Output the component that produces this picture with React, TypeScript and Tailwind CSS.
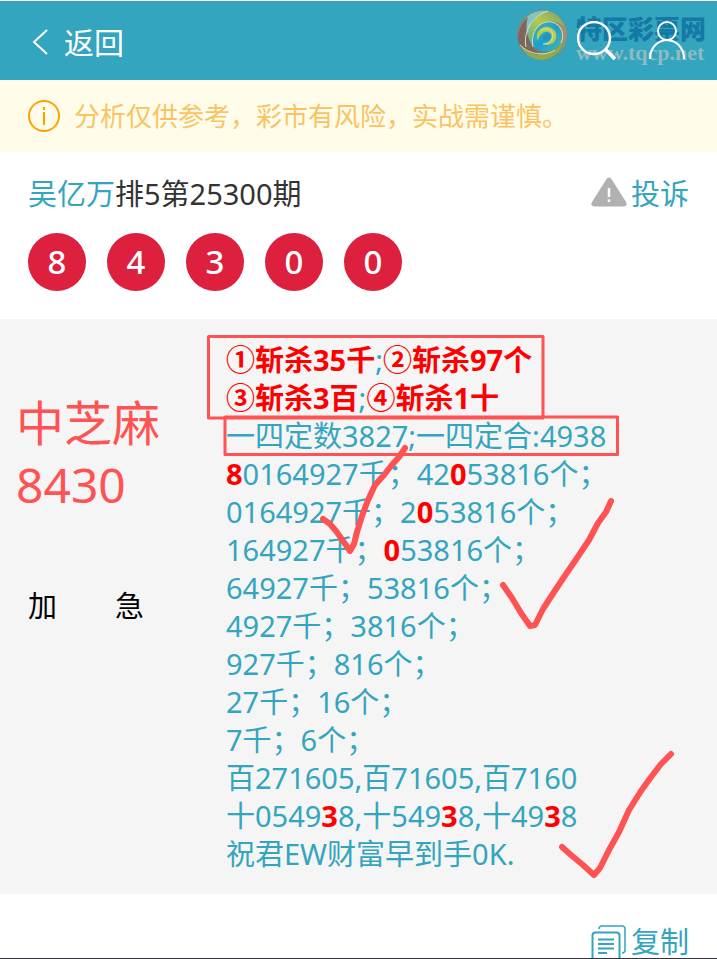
import type { ReactNode } from 'react';

const balls = [8, 4, 3, 0, 0];

function Hit({ children }: { children: ReactNode }) {
  return <b className="font-bold text-[#ff0000]">{children}</b>;
}

function SiteMark() {
  return (
    <div className="pointer-events-none absolute right-[11px] top-2 flex items-center gap-2">
      <svg className="h-[52px] w-[52px]" viewBox="0 0 52 52" fill="none">
        <defs>
          <linearGradient id="rim" x1="0" y1="0" x2="1" y2="1">
            <stop offset="0" stopColor="#7f9a86" />
            <stop offset="0.4" stopColor="#8a6f68" />
            <stop offset="1" stopColor="#4f8f7c" />
          </linearGradient>
          <linearGradient id="leaf" x1="0" y1="1" x2="1" y2="0">
            <stop offset="0" stopColor="#4fae9a" />
            <stop offset="0.5" stopColor="#b7c94e" />
            <stop offset="1" stopColor="#7c9f70" />
          </linearGradient>
          <linearGradient id="east" x1="0" y1="0" x2="0" y2="1">
            <stop offset="0" stopColor="#6fa06f" />
            <stop offset="0.5" stopColor="#b08a6c" />
            <stop offset="1" stopColor="#6f9a80" />
          </linearGradient>
          <linearGradient id="pool" x1="0" y1="0" x2="1" y2="1">
            <stop offset="0" stopColor="#45b6b4" />
            <stop offset="0.5" stopColor="#1c9fd2" />
            <stop offset="1" stopColor="#46b8b0" />
          </linearGradient>
        </defs>
        <circle cx="26" cy="26" r="25" fill="url(#rim)" />
        <path d="M8 35C5 20 13 7 27 2 40 1 51 12 51 26 51 35 47 42 41 46 44 38 42 30 36 22 28 14 12 20 8 35z" fill="url(#east)" />
        <path d="M11 8C16 3 24 1 32 2 22 7 15 14 12 26 10 31 9 34 10 38 4 30 5 17 11 8z" fill="#86c3bd" />
        <path d="M12 36C10 20 18 6 32 2 41 4 46 10 48 18 41 10 30 10 23 17 17 23 15 29 17 37z" fill="url(#leaf)" />
        <path d="M17 37C15 23 23 13 34 13 43 14 48 23 45 32 42 41 32 45 23 41 20 40 18 39 17 37z" fill="url(#pool)" />
        <path d="M4 36C12 43 25 47 37 42 42 39 45 35 47 30 47 40 39 50 27 51 16 51 8 45 4 36z" fill="#93a94f" />
        <path d="M2 30C2 22 6 14 12 8 8 20 12 34 23 46 15 45 3 38 2 30z" fill="#7d6560" />
        <path d="M22 32C18 24 25 16 33 18 41 20 43 29 37 34 34 36 30 37 27 35 33 34 37 30 35 25 31 20 23 24 22 32z" fill="#b9cc45" />
        <path d="M27 30C26 25 32 23 34 27 35 30 31 33 27 30z" fill="#2493bd" />
        <path d="M10 38C7 22 16 7 32 2M17 38C14 22 24 11 36 13 46 16 49 26 45 34M4 36C13 45 28 48 39 41M27 35C34 35 39 29 36 23 33 19 28 19 25 22" stroke="#d5dfc0" strokeWidth="1" />
      </svg>
      <div className="flex flex-col pt-1">
        <span className="text-[26px] font-black leading-[32px] text-[#1479a5]">特区彩票网</span>
        <span className="font-['Liberation_Serif',serif] text-[22px] font-bold leading-[16px] text-[#8cbcc2]">
          www.tqcp.net
        </span>
      </div>
    </div>
  );
}

function Header() {
  return (
    <header className="relative flex h-20 items-center border-t border-white bg-[#33a5be] px-8 text-white">
      <button className="flex items-center gap-4 pt-1 text-[30px] leading-10">
        <svg className="h-7 w-4" viewBox="0 0 16 28" fill="none" stroke="currentColor" strokeWidth="2">
          <path d="M15 1L2 13l13 12" />
        </svg>
        返回
      </button>
      <SiteMark />
      <div className="relative ml-auto flex items-center gap-8">
        <button aria-label="搜索">
          <svg className="h-10 w-10" viewBox="0 0 40 40" fill="none" stroke="currentColor" strokeWidth="2.5">
            <circle cx="17" cy="17" r="16" />
            <path d="M28 28l10 10" strokeWidth="3.5" />
          </svg>
        </button>
        <button aria-label="我的">
          <svg className="h-10 w-9" viewBox="0 0 36 40" fill="none" stroke="currentColor" strokeWidth="2">
            <circle cx="18" cy="10" r="9" />
            <path d="M1 38C1 13 35 13 35 38" />
          </svg>
        </button>
      </div>
    </header>
  );
}

function Notice() {
  return (
    <div className="flex h-[72px] items-center gap-[14px] bg-[#fffdea] px-7 text-[26px] text-[#f9c364]">
      <svg className="h-8 w-8" viewBox="0 0 32 32" fill="none" stroke="#ffa200" strokeWidth="2">
        <circle cx="16" cy="16" r="15" />
        <path d="M16 12v13M16 7v3" />
      </svg>
      <p>分析仅供参考，彩市有风险，实战需谨慎。</p>
    </div>
  );
}

function Issue() {
  return (
    <section className="px-7 pb-7 pt-5">
      <div className="flex items-center justify-between text-[29px] leading-[44px]">
        <h1 className="text-[#333]">
          <a href="#author" className="text-[#33a5be]">吴亿万</a>排5第25300期
        </h1>
        <button className="flex items-center gap-1 text-[#33a5be]">
          <svg className="-mt-1 h-[30px] w-9" viewBox="0 0 36 30">
            <path d="M15.500 2Q18-1 20.500 2L35 25Q37 29 33 29.500H3Q-1 29 1 25z" fill="#b1b1b1" />
            <path d="M18 11v9M18 22.500v2.500" stroke="#fff" strokeWidth="2.500" />
          </svg>
          投诉
        </button>
      </div>
      <div className="mt-[17px] flex gap-[21px]">
        {balls.map((n, i) => (
          <span
            key={i}
            className="flex h-[58px] w-[58px] items-center justify-center rounded-full bg-[#dc203d] text-[33px] font-medium text-white"
          >
            {n}
          </span>
        ))}
      </div>
    </section>
  );
}

// hand-drawn boxes and ticks over the prediction text
function Marks() {
  return (
    <svg
      className="pointer-events-none absolute left-0 top-0 h-[575px] w-[717px]"
      viewBox="0 0 717 575"
      fill="none"
      stroke="#ff5252"
      strokeLinecap="round"
      strokeLinejoin="round"
    >
      <path d="M208.500 17.500H543v81.500H208.500zM225 98H617.500v37.500H225z" strokeWidth="3" />
      <path d="M323 200L330 205 336 212 341 219 350 232 354 225 357 213 362 197 368 181 375 166 384 156 391 147 399 138 405 129" strokeWidth="6" />
      <path d="M503 266L512 279 521 294 530 307 535 306 543 290 554 273 566 255 577 239 589 221 598 204 606 193 611 182" strokeWidth="6" />
      <path d="M562 528L571 536 583 546 594 556 600 549 609 531 619 513 629 491 641 472 651 458 661 445 671 435" strokeWidth="6" />
    </svg>
  );
}

function Prediction() {
  return (
    <section className="relative flex bg-[#f5f5f5] pb-[21px] pt-[22px]">
      <div className="w-[226px] shrink-0 pt-[51px]">
        <p className="pl-4 text-[48px] leading-[62px] text-[#ff5252]">
          中芝麻
          <br />
          8430
        </p>
        <p className="mt-[71px] whitespace-pre pl-7 text-[29px] leading-[38px] text-black">加　　急</p>
      </div>
      <div className="whitespace-nowrap text-[29px] leading-[38px] text-[#33a5be]">
        <p><Hit>①斩杀35千</Hit>;<Hit>②斩杀97个</Hit></p>
        <p><Hit>③斩杀3百</Hit>;<Hit>④斩杀1十</Hit></p>
        <p>一四定数3827;一四定合:4938</p>
        <p><Hit>8</Hit>0164927千；42<Hit>0</Hit>53816个；</p>
        <p>0164927千；2<Hit>0</Hit>53816个；</p>
        <p>164927千；<Hit>0</Hit>53816个；</p>
        <p>64927千；53816个；</p>
        <p>4927千；3816个；</p>
        <p>927千；816个；</p>
        <p>27千；16个；</p>
        <p>7千；6个；</p>
        <p>百271605,百71605,百7160</p>
        <p>十0549<Hit>3</Hit>8,十549<Hit>3</Hit>8,十49<Hit>3</Hit>8</p>
        <p>祝君EW财富早到手0K.</p>
      </div>
      <Marks />
    </section>
  );
}

function CopyBar() {
  return (
    <footer className="flex h-[65px] items-start justify-end overflow-hidden border-b border-[#34343f] px-7 pt-[26px]">
      <button className="flex items-start gap-1 text-[29px] leading-[44px] text-[#33a5be]">
        <svg className="mt-[5px] h-10 w-9" viewBox="0 0 36 40" fill="none" stroke="currentColor" strokeWidth="1.500">
          <path d="M8 4Q8 1 11 1H31Q34 1 34 4V25Q34 28 31 28" />
          <rect x="1.500" y="7.500" width="27" height="35" rx="3" strokeWidth="2" />
          <path d="M7 14.500h16M7 19h16M7 23.500h16M7 28h9" strokeWidth="2" />
        </svg>
        复制
      </button>
    </footer>
  );
}

export default function App() {
  return (
    <main className="overflow-hidden bg-white font-['Noto_Sans','Noto_Sans_CJK_SC',sans-serif]">
      <Header />
      <Notice />
      <Issue />
      <Prediction />
      <CopyBar />
    </main>
  );
}
